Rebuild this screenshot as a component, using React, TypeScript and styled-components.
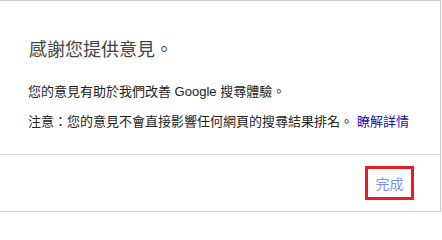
import styled, { createGlobalStyle } from "styled-components";

const GlobalStyle = createGlobalStyle`
    html, body {
        margin: 0;
        padding: 0;
        background: #fff;
    }
    body {
        font-family: "Liberation Sans", Arial, "Noto Sans CJK TC", sans-serif;
    }
`

const Dialog = styled.div`
    box-sizing: border-box;
    width: 441px;
    height: 212px;
    border: solid 1px #cccccc;
    border-left: none;
    background-color: #fff;
    display: flex;
    flex-direction: column;
`

const Body = styled.div`
    padding: 37px 24px 0 28px;
    height: 153px;
    box-sizing: border-box;
`

const Title = styled.h2`
    margin: 0 0 20px 1px;
    font-size: 18px;
    line-height: 24px;
    font-weight: normal;
    color: #444;
`

const Text = styled.p<{ $gap?: number }>`
    margin: 0 0 ${(p) => p.$gap ?? 0}px 0;
    font-size: 13px;
    line-height: 20px;
    color: #222;
    white-space: nowrap;
`

const Link = styled.a`
    color: #1a0dab;
    text-decoration: none;
    margin-left: 4px;
    &:visited {
        color: #1a0dab;
    }
`

const Footer = styled.div`
    border-top: solid 1px #dadada;
    flex: 1;
    display: flex;
    justify-content: flex-end;
    align-items: flex-start;
    padding: 11px 26px 0 0;
`

const DoneButton = styled.button`
    box-sizing: border-box;
    width: 49px;
    height: 34px;
    border: solid 3px #e81c24;
    background: transparent;
    padding: 0;
    font-family: inherit;
    font-size: 14px;
    color: #7b8ff3;
    cursor: pointer;
`

export default function App() {
    return (
        <>
            <GlobalStyle />
            <Dialog>
                <Body>
                    <Title>感謝您提供意見。</Title>
                    <Text $gap={10}>您的意見有助於我們改善 Google 搜尋體驗。</Text>
                    <Text>
                        注意：您的意見不會直接影響任何網頁的搜尋結果排名。
                        <Link href="#">瞭解詳情</Link>
                    </Text>
                </Body>
                <Footer>
                    <DoneButton>完成</DoneButton>
                </Footer>
            </Dialog>
        </>
    )
}
